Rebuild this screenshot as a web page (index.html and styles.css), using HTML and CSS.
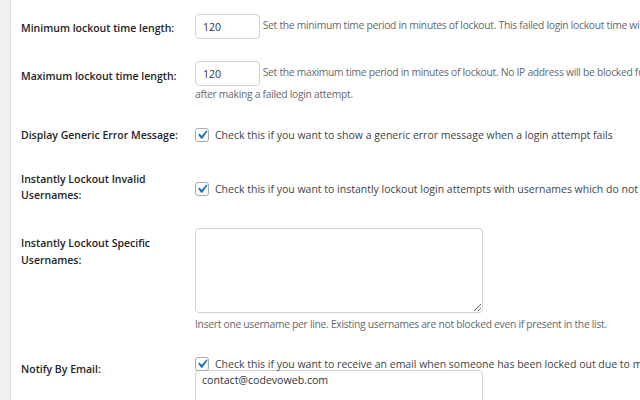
FILE: index.html
```html
<!DOCTYPE html>
<html>
<head>
<meta charset="utf-8">
<link rel="stylesheet" href="styles.css">
</head>
<body>
<div class="page">
  <div class="sidebar"></div>
  <main class="main">
    <div class="row row-1">
      <div class="th">Minimum lockout time length:</div>
      <div class="td"><input class="num" type="text" value="120"> <span class="desc">Set the minimum time period in minutes of lockout. This failed login lockout time will be tripled on each failed login.</span></div>
    </div>
    <div class="row row-2">
      <div class="th">Maximum lockout time length:</div>
      <div class="td"><input class="num" type="text" value="120"> <span class="desc">Set the maximum time period in minutes of lockout. No IP address will be blocked for more than this time period</span><br><span class="desc">after making a failed login attempt.</span></div>
    </div>
    <div class="row row-3">
      <div class="th">Display Generic Error Message:</div>
      <div class="td"><label class="check"><span class="box"><svg viewBox="0 0 20 20" width="20" height="20"><path d="M14.83 4.89l1.34.94-5.81 8.38H9.02L5.78 9.67l1.34-1.25 2.57 2.4z"/></svg></span>Check this if you want to show a generic error message when a login attempt fails</label></div>
    </div>
    <div class="row row-4">
      <div class="th">Instantly Lockout Invalid Usernames:</div>
      <div class="td"><label class="check"><span class="box"><svg viewBox="0 0 20 20" width="20" height="20"><path d="M14.83 4.89l1.34.94-5.81 8.38H9.02L5.78 9.67l1.34-1.25 2.57 2.4z"/></svg></span>Check this if you want to instantly lockout login attempts with usernames which do not exist on your system.</label></div>
    </div>
    <div class="row row-5">
      <div class="th">Instantly Lockout Specific Usernames:</div>
      <div class="td"><textarea class="area names"></textarea><p class="desc note">Insert one username per line. Existing usernames are not blocked even if present in the list.</p></div>
    </div>
    <div class="row row-6">
      <div class="th">Notify By Email:</div>
      <div class="td"><label class="check"><span class="box"><svg viewBox="0 0 20 20" width="20" height="20"><path d="M14.83 4.89l1.34.94-5.81 8.38H9.02L5.78 9.67l1.34-1.25 2.57 2.4z"/></svg></span>Check this if you want to receive an email when someone has been locked out due to maximum failed login attempts.</label><textarea class="area emails">contact@codevoweb.com</textarea></div>
    </div>
  </main>
</div>
</body>
</html>
```
FILE: styles.css
```css
html, body {
  margin: 0;
  padding: 0;
  height: 100%;
  overflow: hidden;
  background: #ffffff;
}
body {
  font-family: "Open Sans", "Noto Sans", sans-serif;
  font-size: 10.5px;
  line-height: 16px;
  color: #3c434a;
}
.page {
  display: flex;
  min-height: 100%;
  width: 1400px;
}
.sidebar {
  width: 10px;
  flex: none;
  background: #f0f0f1;
  border-right: 1px solid #dcdcde;
}
.main {
  flex: 1;
  padding-left: 10px;
}
.row {
  display: flex;
  align-items: flex-start;
}
.th {
  width: 164px;
  flex: none;
  padding-right: 10px;
  font-size: 10.5px;
  font-weight: 600;
  color: #1d2327;
}
.td {
  flex: 1;
  white-space: nowrap;
}
.num {
  box-sizing: border-box;
  width: 65px;
  height: 25px;
  margin: 0;
  padding: 0 7px;
  border: 1px solid #cfd2d6;
  border-radius: 4px;
  font: inherit;
  font-size: 10.6px;
  color: #2c3338;
  vertical-align: middle;
}
.desc {
  font-size: 10.3px;
  letter-spacing: -0.28px;
  color: #646970;
}
.check {
  display: flex;
  align-items: center;
  gap: 5px;
}
.box {
  box-sizing: border-box;
  width: 14px;
  height: 14px;
  flex: none;
  border: 1px solid #a7aaad;
  border-radius: 3px;
  display: flex;
  align-items: center;
  justify-content: center;
  margin-right: 1px;
}
.box svg {
  width: 18px;
  height: 18px;
  fill: #2271b1;
  flex: none;
}
.area {
  display: block;
  box-sizing: border-box;
  width: 288px;
  margin: 0;
  border: 1px solid #cfd2d6;
  border-radius: 4px;
  font: inherit;
  font-size: 10.6px;
  line-height: 16px;
  color: #2c3338;
  padding: 1px 6px;
  resize: vertical;
}
.names {
  height: 85px;
}
.emails {
  height: 60px;
  margin-top: -2px;
}
.note {
  margin: 3px 0 0;
}
.row-1 .th { padding-top: 20px; }
.row-1 .td { padding-top: 14px; padding-bottom: 10px; }
.row-2 .th { padding-top: 19px; }
.row-2 .td { padding-top: 12px; padding-bottom: 8px; }
.row-3 .th { padding-top: 17px; }
.row-3 .td { padding-top: 17px; padding-bottom: 12px; }
.row-4 .th { padding-top: 16px; padding-bottom: 10px; }
.row-4 .td { padding-top: 26px; }
.row-5 .th { padding-top: 22px; line-height: 17px; }
.row-5 .td { padding-top: 15px; padding-bottom: 12px; }
.row-6 .th { padding-top: 17px; }
.row-6 .td { padding-top: 12px; }
```
